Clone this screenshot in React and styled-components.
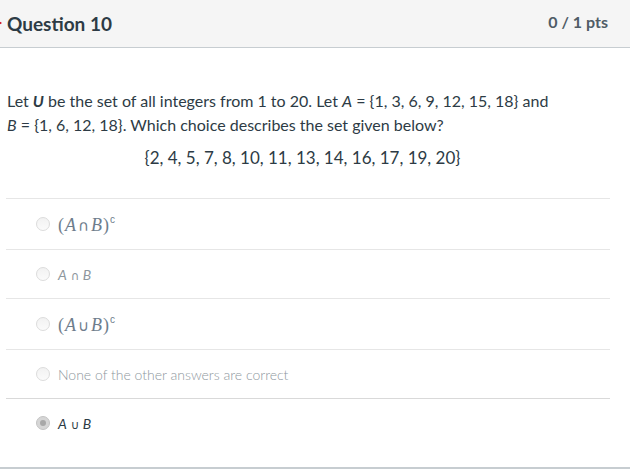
import React from "react"
import styled, { createGlobalStyle } from "styled-components"

const colors = {
  text: "#2d3b45",
  muted: "#8e979e",
  line: "#e6e6e6",
  headerBg: "#f5f5f5",
  headerLine: "#c7cdd1",
}

const GlobalStyle = createGlobalStyle`
  html, body {
    margin: 0;
    padding: 0;
    background: #fff;
    font-family: Lato, "Open Sans", "Liberation Sans", sans-serif;
    color: ${colors.text};
  }
`

const answers = [
  { id: 1, kind: "math", op: "∩", comp: true },
  { id: 2, kind: "plain", op: "∩" },
  { id: 3, kind: "math", op: "∪", comp: true },
  { id: 4, kind: "text", label: "None of the other answers are correct" },
  { id: 5, kind: "plain", op: "∪", selected: true },
]

const Answer = ({ item }) => {
  let content = null
  if (item.kind === "math") {
    content = (
      <MathExpr>
        (<i>A</i>
        <Op>{item.op}</Op>
        <i>B</i>)<Sup>c</Sup>
      </MathExpr>
    )
  } else if (item.kind === "plain") {
    content = (
      <PlainExpr $selected={item.selected}>
        <i>A</i> <OpSmall>{item.op}</OpSmall> <i>B</i>
      </PlainExpr>
    )
  } else {
    content = <AnswerText>{item.label}</AnswerText>
  }
  return (
    <AnswerRow $last={item.id === answers.length} $tall={item.kind === "math"}>
      <Radio $selected={item.selected} />
      {content}
    </AnswerRow>
  )
}

const App = () => {
  return (
    <>
      <GlobalStyle />
      <Card>
        <Header>
          <Marker />
          <Title>Question 10</Title>
          <Points>0 / 1 pts</Points>
        </Header>
        <Body>
          <QuestionText>
            Let <b><i>U</i></b> be the set of all integers from 1 to 20. Let{" "}
            <i>A</i> = {"{"}1, 3, 6, 9, 12, 15, 18{"}"} and
            <br />
            <i>B</i> = {"{"}1, 6, 12, 18{"}"}. Which choice describes the set
            given below?
          </QuestionText>
          <SetLine>{"{"}2, 4, 5, 7, 8, 10, 11, 13, 14, 16, 17, 19, 20{"}"}</SetLine>
          <AnswerList>
            {answers.map((item) => (
              <Answer key={item.id} item={item} />
            ))}
          </AnswerList>
        </Body>
      </Card>
    </>
  )
}

const Card = styled.div`
  width: 630px;
  height: 469px;
  overflow: hidden;
  border-bottom: 2px solid #c7cdd1;
  box-sizing: border-box;
`

const Header = styled.div`
  position: relative;
  display: flex;
  align-items: center;
  justify-content: space-between;
  height: 47px;
  padding: 0 22px 0 7px;
  background: ${colors.headerBg};
  border-bottom: 1px solid ${colors.headerLine};
`

const Marker = styled.span`
  position: absolute;
  left: -3px;
  top: 20px;
  width: 0;
  height: 0;
  border-top: 3px solid transparent;
  border-bottom: 3px solid transparent;
  border-left: 5px solid #d0021b;
`

const Title = styled.h2`
  margin: 0;
  font-size: 19px;
  font-weight: 700;
  color: ${colors.text};
`

const Points = styled.div`
  font-size: 16px;
  font-weight: 700;
  color: #4f5c66;
  margin-top: -4px;
`

const Body = styled.div`
  padding: 41px 20px 0 7px;
`

const QuestionText = styled.p`
  margin: 0;
  font-size: 16px;
  line-height: 24px;
  color: ${colors.text};
`

const SetLine = styled.p`
  margin: 9px 0 0;
  padding-right: 12px;
  text-align: center;
  font-size: 17px;
  line-height: 24px;
`

const AnswerList = styled.div`
  margin: 28px 0 0 -1px;
  border-top: 1px solid ${colors.line};
`

const AnswerRow = styled.div`
  display: flex;
  align-items: center;
  gap: 8px;
  height: ${(p) => (p.$last ? "48px" : p.$tall ? "50px" : "48px")};
  padding: 0 0 ${(p) => (p.$last ? "20px" : "0")} 30px;
  border-bottom: 1px solid ${(p) => (p.$last ? "transparent" : colors.line)};
  &:nth-child(4) {
    border-bottom-color: #d9d9d9;
  }
`

const Radio = styled.span`
  position: relative;
  width: 12px;
  height: 12px;
  border-radius: 50%;
  border: 1px solid ${(p) => (p.$selected ? "#c4c4c4" : "#dcdcdc")};
  background: ${(p) =>
    p.$selected ? "#d6d6d6" : "linear-gradient(#f2f2f2, #fbfbfb)"};
  flex-shrink: 0;
  &::after {
    content: "";
    display: ${(p) => (p.$selected ? "block" : "none")};
    position: absolute;
    left: 3px;
    top: 3px;
    width: 6px;
    height: 6px;
    border-radius: 50%;
    background: #a8a8a8;
  }
`

const MathExpr = styled.span`
  font-family: "Liberation Serif", "DejaVu Serif", serif;
  font-size: 18px;
  color: #6e7d8c;
  letter-spacing: 1px;
  margin-top: 3px;
`

const Op = styled.span`
  font-family: "DejaVu Sans", sans-serif;
  font-size: 15px;
  padding: 0 1px;
`

const Sup = styled.sup`
  font-family: "Liberation Sans", sans-serif;
  font-size: 10px;
  vertical-align: 8px;
  line-height: 0;
`

const PlainExpr = styled.span`
  font-size: 14px;
  color: ${(p) => (p.$selected ? colors.text : colors.muted)};
  i {
    font-style: italic;
  }
`

const OpSmall = styled.span`
  font-family: "DejaVu Sans", sans-serif;
  font-size: 12px;
`

const AnswerText = styled.span`
  font-size: 14px;
  font-weight: 300;
  color: ${colors.muted};
`

export default App
